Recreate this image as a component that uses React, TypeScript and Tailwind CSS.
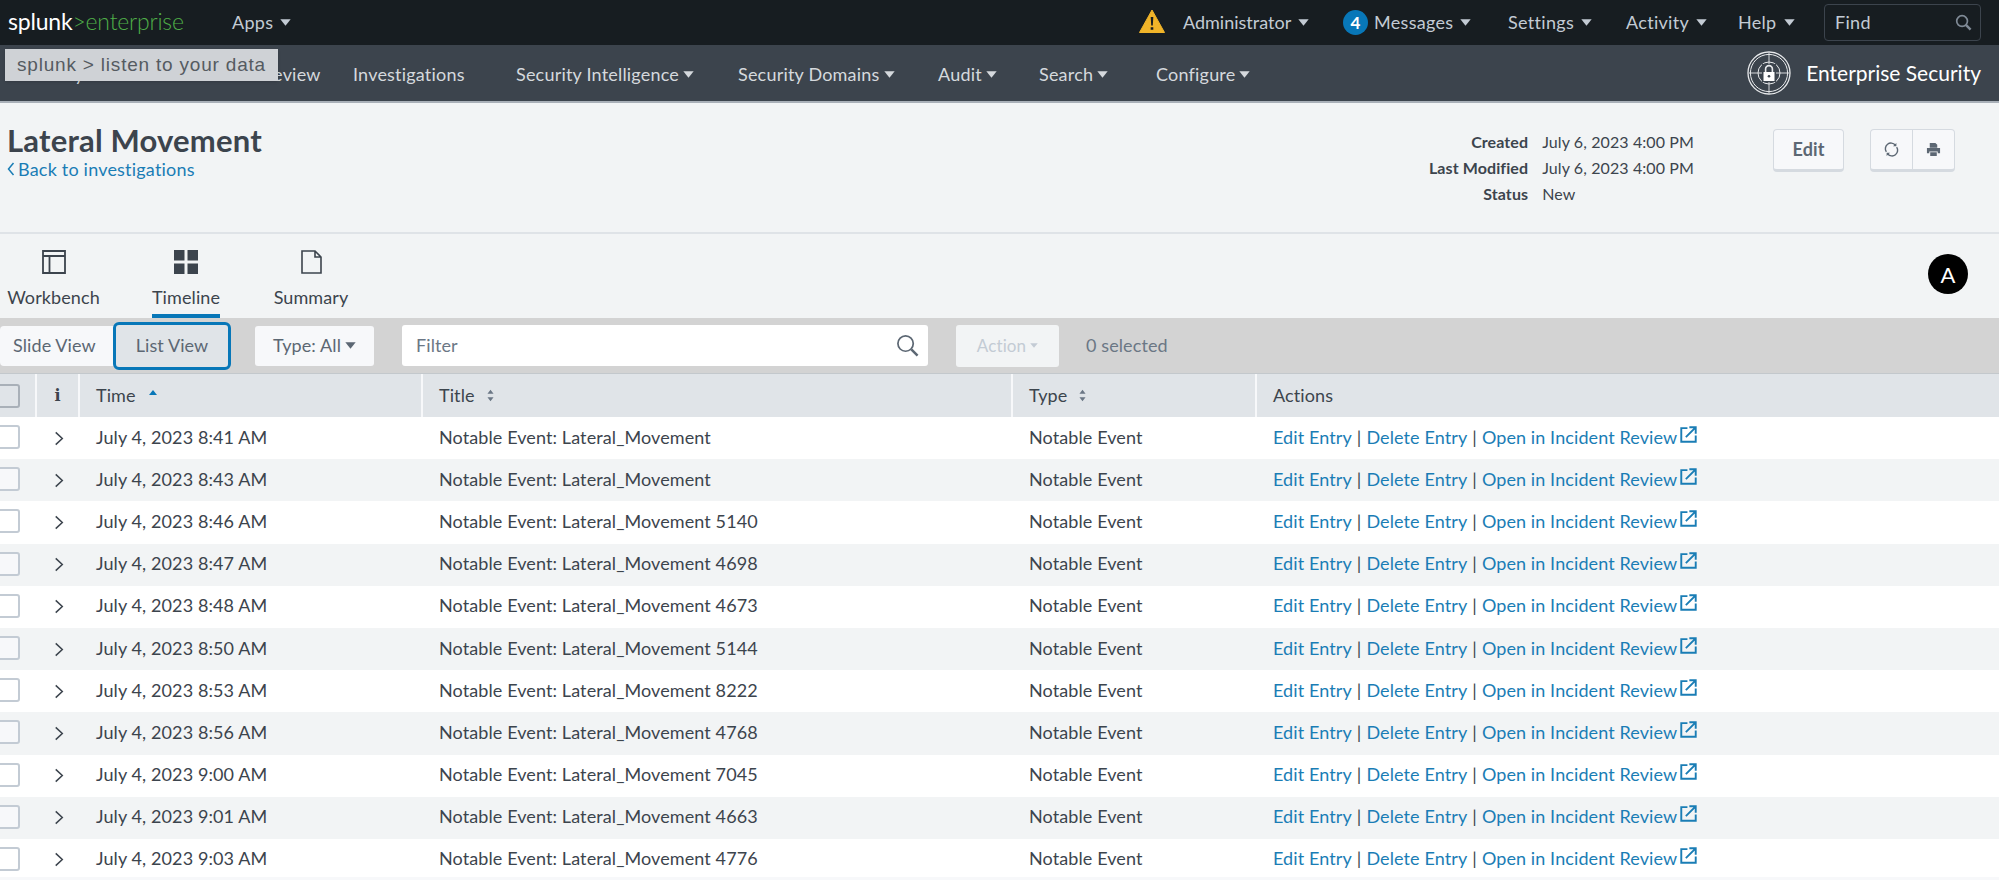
import React from "react";

const Caret = ({ className = "w-[11px] h-[7px]" }: { className?: string }) => (
  <svg viewBox="0 0 10 6" preserveAspectRatio="none" className={`inline-block ${className}`} fill="currentColor">
    <path d="M0.3 0.2h9.4L5 5.8z" />
  </svg>
);

const SortIcon = () => (
  <svg viewBox="0 0 8 14" className="ml-[12px] w-[7px] h-[13px] text-[#6b7785]" fill="currentColor">
    <path d="M4 0.5L7.5 5H0.5zM4 13.5L0.5 9h7z" />
  </svg>
);

const External = () => (
  <svg viewBox="0 0 16 16" className="ml-[3px] -mt-[6px] w-[17px] h-[17px] text-[#1a7db5]" fill="none" stroke="currentColor" strokeWidth="1.8">
    <path d="M7 2H1.2v12.8H14.8V9" />
    <path d="M5.5 10.5L14 2M8.8 1.2h6v6" />
  </svg>
);

const rows = [
  ["8:41", ""], ["8:43", ""], ["8:46", " 5140"], ["8:47", " 4698"], ["8:48", " 4673"], ["8:50", " 5144"],
  ["8:53", " 8222"], ["8:56", " 4768"], ["9:00", " 7045"], ["9:01", " 4663"], ["9:03", " 4776"],
];

const secondNav: [string, string, boolean][] = [
  ["Security Posture", "w-[174px]", false],
  ["Incident Review", "w-[161px]", false],
  ["Investigations", "w-[163px]", false],
  ["Security Intelligence", "w-[222px]", true],
  ["Security Domains", "w-[200px]", true],
  ["Audit", "w-[101px]", true],
  ["Search", "w-[117px]", true],
  ["Configure", "w-[120px]", true],
];

const topNav: [string, string][] = [
  ["Messages", "w-[134px]"],
  ["Settings", "w-[118px]"],
  ["Activity", "w-[112px]"],
  ["Help", "w-[86px]"],
];

const gridCols = "grid grid-cols-[37px_43px_343px_590px_244px_1fr]";

export default function App() {
  return (
    <div className="relative h-[880px] w-[1999px] overflow-hidden bg-[#f2f4f5] text-[#3c444d] font-['Lato','Liberation_Sans',sans-serif] text-[18px] tracking-[0.1px]">
      {/* top bar */}
      <header className="flex h-[45px] items-center bg-[#171d21] text-[#c3cbd4] tracking-[0.3px]">
        <div className="w-[232px] pl-[8px] text-[23px] leading-none tracking-[-0.2px] -mt-[3px]">
          <span className="text-white">splunk</span>
          <span className="font-light text-[#4fae48]">&gt;enterprise</span>
        </div>
        <div className="flex items-center gap-[7px]">
          Apps <Caret />
        </div>
        <div className="ml-auto flex items-center">
          <svg viewBox="0 0 26 24" className="w-[26px] h-[24px] mr-[18px] -mt-[3px]">
            <path d="M13 1L25.5 23.5H0.5z" fill="#f0b429" stroke="#f0b429" strokeLinejoin="round" />
            <path d="M11.7 8h2.6l-.5 8.5h-1.6zM11.7 18.2h2.6v2.6h-2.6z" fill="#171d21" />
          </svg>
          <div className="w-[160px] flex items-center gap-[7px] tracking-normal">
            Administrator <Caret />
          </div>
          <div className="flex items-center justify-center w-[25px] h-[25px] mr-[6px] rounded-full bg-[#0877b8] text-white text-[17px] font-bold">
            4
          </div>
          {topNav.map(([label, w]) => (
            <div key={label} className={`${w} flex items-center gap-[7px]`}>
              {label} <Caret />
            </div>
          ))}
          <div className="mr-[18px] flex h-[37px] w-[157px] items-center justify-between rounded-[4px] border border-[#3c444d] pl-[10px] pr-[8px]">
            Find
            <svg viewBox="0 0 18 18" className="w-[17px] h-[17px] text-[#7f8a96]" fill="none" stroke="currentColor" strokeWidth="1.8">
              <circle cx="7.5" cy="7.5" r="5.7" />
              <path d="M11.8 11.8L16.5 16.5" strokeWidth="2.6" />
            </svg>
          </div>
        </div>
      </header>

      {/* secondary nav */}
      <nav className="flex h-[58px] items-center border-b-2 border-[#a9b0b8] bg-[#3c444d] pl-[18px] text-[#d5d9dd] tracking-[0.2px]">
        {secondNav.map(([label, w, caret]) => (
          <div key={label} className={`${w} flex items-center gap-[4px] pt-[2px]`}>
            {label}
            {caret && <Caret />}
          </div>
        ))}
        <div className="ml-auto mr-[18px] flex items-center gap-[15px] text-white text-[21px] tracking-normal">
          <svg viewBox="0 0 44 44" className="w-[44px] h-[44px]" fill="none" stroke="#e8eaec">
            <circle cx="22" cy="22" r="21" strokeWidth="1.3" />
            <circle cx="22" cy="22" r="18.6" strokeWidth="1" />
            <circle cx="22" cy="22" r="11" strokeWidth="1" />
            <path d="M22 2v40M2 22h40" strokeWidth="0.9" />
            <rect x="15" y="13" width="14" height="18" fill="#3c444d" stroke="none" />
            <path d="M18.6 21v-3a3.4 3.4 0 0 1 6.8 0v3" strokeWidth="1.6" />
            <rect x="16.5" y="21" width="11" height="9" fill="#fff" stroke="none" />
            <circle cx="22" cy="25.3" r="1.3" fill="#3c444d" stroke="none" />
          </svg>
          Enterprise Security
        </div>
      </nav>

      {/* title header */}
      <section className="flex h-[131px] items-start border-b-2 border-[#dfe3e7] pl-[7px]">
        <div className="pt-[17px]">
          <h1 className="text-[31px] font-bold leading-[40px] tracking-[0.2px] text-[#3c444d]">Lateral Movement</h1>
          <a className="flex items-center gap-[3px] leading-[22px] -mt-[2px] tracking-[0.2px] text-[#1a7db5]">
            <svg viewBox="0 0 8 14" className="w-[8px] h-[14px]" fill="none" stroke="currentColor" strokeWidth="1.5">
              <path d="M6.5 1L1.5 7l5 6" />
            </svg>
            Back to investigations
          </a>
        </div>
        <div className="ml-auto mr-[79px] mt-[26px] grid grid-cols-[auto_auto] gap-x-[14px] text-[16px] leading-[26px]">
          <div className="text-right font-bold">Created</div>
          <div>July 6, 2023 4:00 PM</div>
          <div className="text-right font-bold">Last Modified</div>
          <div>July 6, 2023 4:00 PM</div>
          <div className="text-right font-bold">Status</div>
          <div>New</div>
        </div>
        <button className="mt-[26px] h-[43px] w-[71px] rounded-[4px] border border-[#d5dae0] border-b-[3px] bg-[#f7f8fa] font-bold text-[#5c6773]">
          Edit
        </button>
        <div className="ml-[26px] mr-[44px] mt-[26px] flex h-[43px] w-[85px] rounded-[4px] border border-[#d5dae0] border-b-[3px] bg-[#f7f8fa]">
          <div className="flex flex-1 items-center justify-center border-r border-[#d5dae0]">
            <svg viewBox="0 0 16 16" className="w-[15px] h-[15px] text-[#5c6773]" fill="none" stroke="currentColor" strokeWidth="1.5">
              <path d="M2.5 10.5A6 6 0 0 1 12 3.2M13.5 5.5A6 6 0 0 1 4 12.8" />
              <path d="M13.2 1v3.6H9.6zM2.8 15v-3.6h3.6z" fill="currentColor" stroke="none" />
            </svg>
          </div>
          <div className="flex flex-1 items-center justify-center">
            <svg viewBox="0 0 16 16" className="w-[15px] h-[15px] text-[#5c6773]" fill="currentColor">
              <path d="M4 1h6l2 2v3H4zM1 6.5h14V12h-2.5v-2h-9v2H1zM4.5 11h7v4h-7z" />
            </svg>
          </div>
        </div>
      </section>

      {/* tabs */}
      <section className="relative flex h-[84px]">
        <div className="ml-[7px] w-[145px] flex flex-col items-start">
          <div className="flex w-[93px] flex-col items-center pt-[16px]">
            <svg viewBox="0 0 24 24" className="w-[24px] h-[24px]" fill="none" stroke="#3c444d" strokeWidth="1.8">
              <path d="M1 1h22v22H1zM1 6h22M7.5 6v17" />
            </svg>
            <span className="mt-[12px] leading-[22px]">Workbench</span>
          </div>
        </div>
        <div className="flex h-[84px] w-[68px] flex-col items-center border-b-[4px] border-[#0877b8] pt-[16px]">
          <svg viewBox="0 0 24 24" className="w-[24px] h-[24px]" fill="#3c444d">
            <path d="M0 0h10.5v10.5H0zM13.5 0H24v10.5H13.5zM0 13.5h10.5V24H0zM13.5 13.5H24V24H13.5z" />
          </svg>
          <span className="mt-[12px] leading-[22px]">Timeline</span>
        </div>
        <div className="ml-[52px] flex w-[78px] flex-col items-center pt-[16px]">
          <svg viewBox="0 0 21 24" className="w-[21px] h-[24px]" fill="none" stroke="#3c444d" strokeWidth="1.8">
            <path d="M1 1h13l6 6v16H1zM14 1v6h6" strokeWidth="1.6" />
          </svg>
          <span className="mt-[12px] leading-[22px]">Summary</span>
        </div>
        <div className="absolute left-[1928px] top-[20px] flex h-[40px] w-[40px] items-center justify-center rounded-full bg-black text-[22px] text-white">
          A
        </div>
      </section>

      {/* toolbar */}
      <section className="flex h-[56px] items-center border-b border-[#c3c8cc] bg-[#d3d3d3]">
        <button className="h-[40px] w-[115px] rounded-l-[4px] bg-[#f7f8fa] pl-[13px] text-left text-[#5c6773]">Slide View</button>
        <button className="-ml-[2px] h-[48px] w-[118px] rounded-[6px] border-[3px] border-[#0877b8] bg-[#e0e4e8] text-[#5c6773]">List View</button>
        <button className="ml-[24px] flex h-[40px] w-[119px] items-center justify-center gap-[4px] rounded-[3px] bg-[#f7f8fa] text-[#5c6773]">
          Type: All <Caret />
        </button>
        <div className="ml-[28px] flex h-[41px] w-[526px] items-center justify-between rounded-[3px] bg-white pl-[14px] pr-[9px] text-[#6b7785]">
          Filter
          <svg viewBox="0 0 24 24" className="w-[23px] h-[23px] text-[#5c6773]" fill="none" stroke="currentColor" strokeWidth="1.8">
            <circle cx="10" cy="10" r="8" />
            <path d="M16 16l6.5 6.5" strokeWidth="2.6" />
          </svg>
        </div>
        <button className="ml-[28px] flex h-[42px] w-[103px] items-center justify-center gap-[4px] rounded-[3px] bg-[#f2f4f5] text-[17px] text-[#c3cbd4]">
          Action <Caret className="w-[8px] h-[5px]" />
        </button>
        <span className="ml-[27px] text-[#6b7785]">0 selected</span>
      </section>

      {/* table head */}
      <div className={`${gridCols} h-[43px] items-stretch bg-[#e0e4e8] font-normal`}>
        <div className="relative flex items-center border-r-2 border-[#f7f8fa]">
          <div className="-ml-[4px] h-[24px] w-[24px] rounded-[3px] border-2 border-[#a9b0b8] bg-[#e0e4e8]" />
        </div>
        <div className="flex items-center justify-center border-r-2 border-[#f7f8fa] font-['DejaVu_Serif',serif] font-bold text-[16px]">i</div>
        <div className="flex items-center border-r-2 border-[#f7f8fa] pl-[16px]">
          Time
          <svg viewBox="0 0 8 5" className="ml-[13px] -mt-[6px] w-[8px] h-[5px] text-[#0877b8]" fill="currentColor">
            <path d="M4 0l4 5H0z" />
          </svg>
        </div>
        <div className="flex items-center border-r-2 border-[#f7f8fa] pl-[16px]">
          Title <SortIcon />
        </div>
        <div className="flex items-center border-r-2 border-[#f7f8fa] pl-[16px]">
          Type <SortIcon />
        </div>
        <div className="flex items-center pl-[16px]">Actions</div>
      </div>

      {/* rows */}
      <div>
        {rows.map(([time, code], i) => (
          <div key={time} className={`${gridCols} h-[42.2px] items-center pb-[2px] ${i % 2 === 1 ? "bg-[#f2f4f5]" : "bg-white"}`}>
            <div>
              <div className={`-ml-[4px] h-[24px] w-[24px] rounded-[3px] border-2 border-[#c3cbd4] ${i % 2 === 1 ? "bg-[#f7f8fa]" : "bg-white"}`} />
            </div>
            <div className="flex justify-center">
              <svg viewBox="0 0 10 16" className="w-[10px] h-[15px] mt-[2px]" fill="none" stroke="#3c444d" strokeWidth="1.6">
                <path d="M1.5 1.5L8.5 8l-7 6.5" />
              </svg>
            </div>
            <div className="pl-[16px]">July 4, 2023 {time} AM</div>
            <div className="pl-[16px]">Notable Event: Lateral_Movement{code}</div>
            <div className="pl-[16px]">Notable Event</div>
            <div className="flex items-center pl-[16px] text-[#1a7db5]">
              <span>Edit Entry</span>
              <span className="mx-[5px] text-[#3c444d]">|</span>
              <span>Delete Entry</span>
              <span className="mx-[5px] text-[#3c444d]">|</span>
              <span>Open in Incident Review</span>
              <External />
            </div>
          </div>
        ))}
      </div>

      {/* tooltip */}
      <div className="absolute left-[5px] top-[49px] flex h-[32px] w-[273px] items-center justify-center bg-[#cfd2d6] font-['Liberation_Sans',sans-serif] text-[19px] tracking-[0.8px] text-[#555b61] shadow-sm">
        splunk &gt; listen to your data
      </div>
      <div className="absolute bottom-0 left-0 h-[3px] w-full bg-[#f7f8fa]" />
    </div>
  );
}
